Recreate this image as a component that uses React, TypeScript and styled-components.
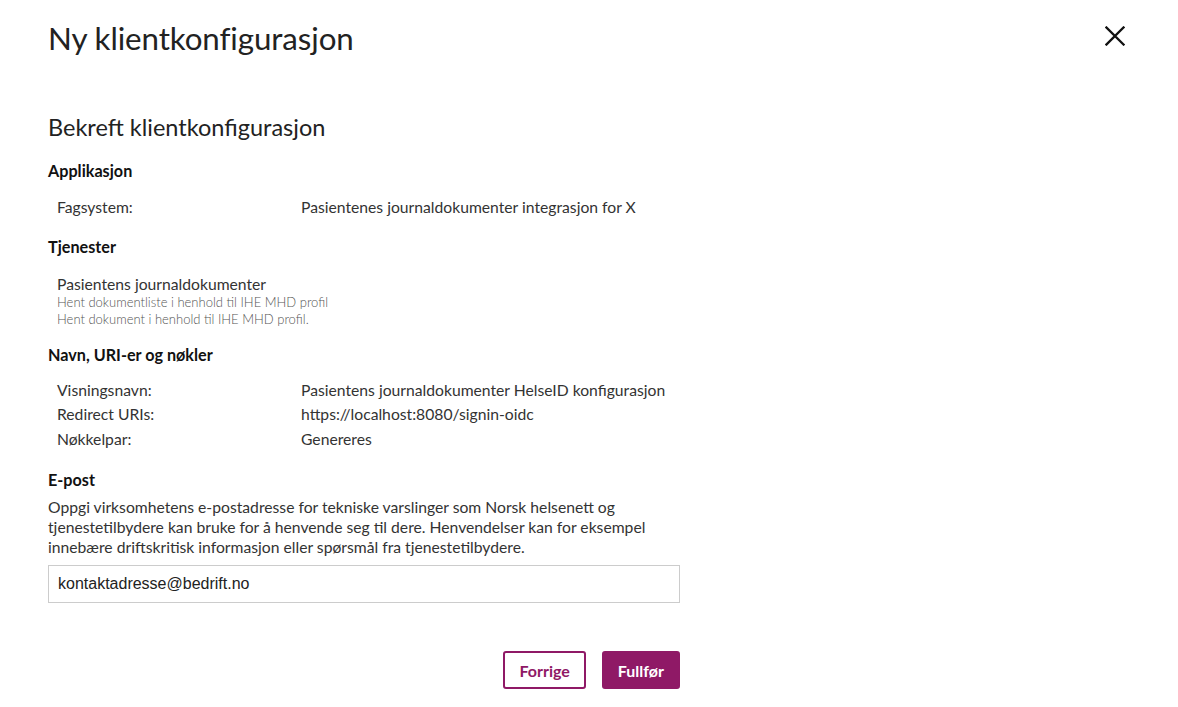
import React from "react";
import styled, { createGlobalStyle } from "styled-components";

const Global = createGlobalStyle`
  html, body { margin: 0; padding: 0; background: #fff; }
  body { font-family: Lato, "Open Sans", sans-serif; color: #222; }
  * { box-sizing: border-box; }
`;

const Page = styled.div`
  width: 1178px;
  height: 707px;
  padding: 0 48px;
  display: flex;
  flex-direction: column;
`;

const Header = styled.div`
  display: flex;
  justify-content: space-between;
  align-items: center;
  height: 76px;
`;

const Title = styled.h1`
  margin: 0;
  font-size: 31.3px;
  font-weight: 400;
  color: #222;
  letter-spacing: -0.1px;
`;

const CloseButton = styled.button`
  border: 0;
  background: none;
  padding: 0;
  margin-right: 1px;
  margin-top: -4px;
  width: 28px;
  height: 28px;
  display: flex;
  align-items: center;
  justify-content: center;
  cursor: pointer;
`;

const Content = styled.div`
  width: 632px;
  display: flex;
  flex-direction: column;
`;

const SubTitle = styled.h2`
  margin: 36px 0 0;
  font-size: 23.5px;
  font-weight: 400;
  color: #222;
  line-height: 30px;
`;

const SectionTitle = styled.h3<{ $top: number }>`
  margin: ${(p) => p.$top}px 0 0;
  font-size: 16.2px;
  font-weight: 700;
  line-height: 20px;
  color: #111;
`;

const Rows = styled.div<{ $top: number }>`
  margin-top: ${(p) => p.$top}px;
  padding-left: 9px;
  display: flex;
  flex-direction: column;
`;

const Row = styled.div`
  display: grid;
  grid-template-columns: 244px 1fr;
  font-size: 15.7px;
  line-height: 24.5px;
  color: #333;
`;

const Service = styled.div`
  margin-top: 17px;
  padding-left: 9px;
  display: flex;
  flex-direction: column;
`;

const ServiceName = styled.div`
  font-size: 15.7px;
  line-height: 20px;
  color: #333;
`;

const ServiceDesc = styled.div`
  font-size: 13px;
  line-height: 17px;
  color: #555;
  font-weight: 300;
`;

const Paragraph = styled.p`
  margin: 7px 0 0;
  font-size: 15.7px;
  line-height: 20px;
  color: #333;
`;

const Input = styled.input`
  margin-top: 8px;
  height: 38px;
  width: 632px;
  border: 1px solid #ccc;
  padding: 0 9px;
  font-family: "Liberation Sans", Arial, sans-serif;
  font-size: 16px;
  color: #222;
  outline: none;
`;

const Actions = styled.div`
  margin-top: 48px;
  display: flex;
  justify-content: flex-end;
  gap: 16px;
`;

const Button = styled.button<{ $primary?: boolean }>`
  height: 38px;
  padding: 0 14px;
  border-radius: 3px;
  border: 2px solid #8f1966;
  background: ${(p) => (p.$primary ? "#8f1966" : "#fff")};
  color: ${(p) => (p.$primary ? "#fff" : "#8f1966")};
  font-family: Lato, sans-serif;
  font-weight: 700;
  font-size: 16px;
  cursor: pointer;
`;

export default function App() {
  return (
    <>
      <Global />
      <Page>
        <Header>
          <Title>Ny klientkonfigurasjon</Title>
          <CloseButton aria-label="Lukk">
            <svg width="20" height="20" viewBox="0 0 20 20">
              <path d="M1.5 1.5 L18.5 18.5 M18.5 1.5 L1.5 18.5" stroke="#111" strokeWidth="2.3" strokeLinecap="square" />
            </svg>
          </CloseButton>
        </Header>
        <Content>
          <SubTitle>Bekreft klientkonfigurasjon</SubTitle>
          <SectionTitle $top={19}>Applikasjon</SectionTitle>
          <Rows $top={14}>
            <Row>
              <span>Fagsystem:</span>
              <span>Pasientenes journaldokumenter integrasjon for X</span>
            </Row>
          </Rows>
          <SectionTitle $top={17}>Tjenester</SectionTitle>
          <Service>
            <ServiceName>Pasientens journaldokumenter</ServiceName>
            <ServiceDesc>Hent dokumentliste i henhold til IHE MHD profil</ServiceDesc>
            <ServiceDesc>Hent dokument i henhold til IHE MHD profil.</ServiceDesc>
          </Service>
          <SectionTitle $top={17}>Navn, URI-er og nøkler</SectionTitle>
          <Rows $top={13}>
            <Row>
              <span>Visningsnavn:</span>
              <span>Pasientens journaldokumenter HelseID konfigurasjon</span>
            </Row>
            <Row>
              <span>Redirect URIs:</span>
              <span>https://localhost:8080/signin-oidc</span>
            </Row>
            <Row>
              <span>Nøkkelpar:</span>
              <span>Genereres</span>
            </Row>
          </Rows>
          <SectionTitle $top={19}>E-post</SectionTitle>
          <Paragraph>
            Oppgi virksomhetens e-postadresse for tekniske varslinger som Norsk helsenett og
            tjenestetilbydere kan bruke for å henvende seg til dere. Henvendelser kan for eksempel
            innebære driftskritisk informasjon eller spørsmål fra tjenestetilbydere.
          </Paragraph>
          <Input defaultValue="kontaktadresse@bedrift.no" />
          <Actions>
            <Button>Forrige</Button>
            <Button $primary>Fullfør</Button>
          </Actions>
        </Content>
      </Page>
    </>
  );
}
